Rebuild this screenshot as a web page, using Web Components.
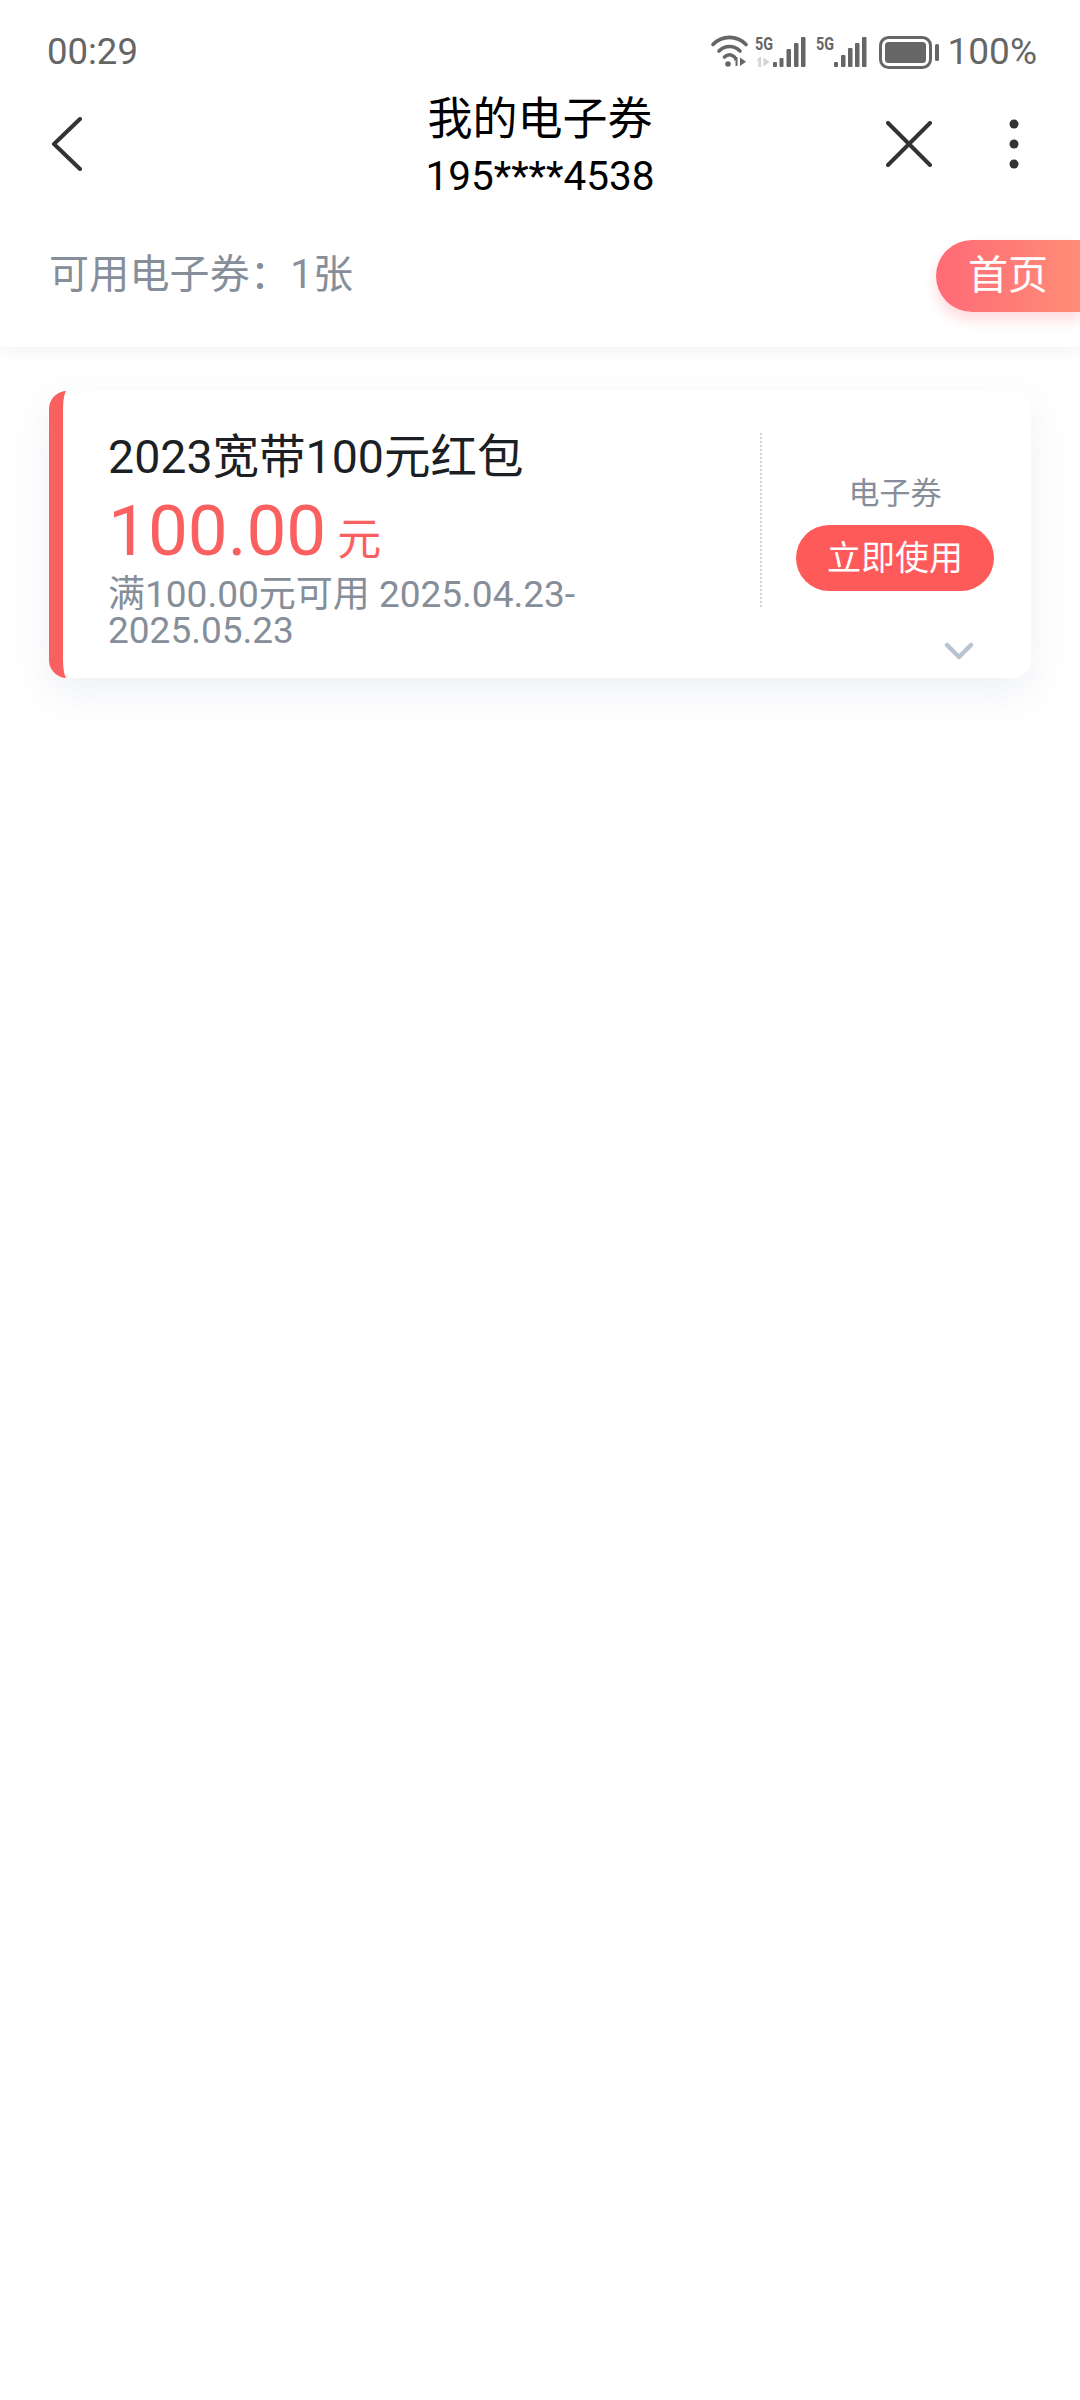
<!DOCTYPE html>
<html lang="zh-CN">
<head>
<meta charset="utf-8">
<title>我的电子券</title>
<style>
  html, body { margin: 0; background: #fff; }
  body { width: 1080px; height: 2400px; overflow: hidden; font-family: Roboto, "Noto Sans CJK SC", sans-serif; }
</style>
</head>
<body>
<coupon-page>
  <status-bar slot="top" time="00:29" battery="100%"></status-bar>
  <nav-bar slot="top" phone="195****4538">我的电子券</nav-bar>
  <coupon-summary slot="top">可用电子券：1张</coupon-summary>
  <coupon-card
    amount="100.00"
    kind="电子券"
    action="立即使用">
    <span slot="title">2023宽带100元红包</span>
    <span slot="rule">满100.00元可用 2025.04.23-<br>2025.05.23</span>
  </coupon-card>
</coupon-page>

<script>
class CouponPage extends HTMLElement {
  constructor() {
    super();
    this.attachShadow({ mode: "open" });
    this.shadowRoot.innerHTML = `
      <style>
        :host { display: block; width: 1080px; height: 2400px; background: #fff; }
        header { background: #fff; box-shadow: 0 4px 16px rgba(40, 50, 90, 0.06); position: relative; }
        main { padding: 44px 49px 0 49px; }
      </style>
      <header><slot name="top"></slot></header>
      <main><slot></slot></main>
    `;
  }
}

class StatusBar extends HTMLElement {
  constructor() {
    super();
    this.attachShadow({ mode: "open" });
  }

  connectedCallback() {
    this.shadowRoot.innerHTML = `
      <style>
        :host { display: flex; align-items: center; height: 76px; padding: 14px 43px 0 47px; color: #666; font-size: 37px; line-height: 76px; }
        .time { flex: 1; font-size: 36.500px; }
        .icons { display: flex; align-items: center; gap: 9px; }
        svg { display: block; }
      </style>
      <span class="time">${this.getAttribute("time")}</span>
      <div class="icons">
        <svg width="228" height="36" viewBox="712 34 228 36">
          <g fill="none" stroke="#666" stroke-width="3.600" stroke-linecap="round">
            <path d="M714 44.500c9-9.500 24-9.500 33 0"/>
            <path d="M720 51c6-6 15-6 21 0"/>
            <path d="M725.500 57c3-2.800 7-2.800 10 0"/>
          </g>
          <circle cx="729" cy="64" r="2.800" fill="#666"/>
          <path d="M736.500 66h2v-9h-1.500l-2 2.500v1.500l1.500-1zM741 57.500v8.500l6-4.200z" fill="#666"/>
          <g font-family="Roboto, sans-serif" font-weight="700" font-size="18" fill="#666">
            <text x="756" y="50" textLength="18" lengthAdjust="spacingAndGlyphs">5G</text>
            <text x="817" y="50" textLength="18" lengthAdjust="spacingAndGlyphs">5G</text>
          </g>
          <path d="M759.500 67h2.500v-10h-1.500l-2.500 3v1.500l1.500-1zM764.500 57.500v9l6-4.500z" fill="#d4d4d4"/>
          <g fill="#666">
            <rect x="774" y="62" width="4" height="5" rx="1"/>
            <rect x="780.500" y="58" width="4" height="9" rx="1"/>
            <rect x="787.500" y="49" width="4.500" height="18" rx="1"/>
            <rect x="795" y="43" width="4.500" height="24" rx="1"/>
            <rect x="802" y="37" width="4.500" height="30" rx="1"/>
            <rect x="835" y="62" width="4" height="5" rx="1"/>
            <rect x="842" y="55" width="4.500" height="12" rx="1"/>
            <rect x="849" y="48" width="4.500" height="19" rx="1"/>
            <rect x="856" y="43" width="4.500" height="24" rx="1"/>
            <rect x="863" y="37" width="4.500" height="30" rx="1"/>
          </g>
          <rect x="881.500" y="37.500" width="50" height="30" rx="8" fill="none" stroke="#666" stroke-width="3"/>
          <rect x="886" y="42" width="41" height="21" rx="3.500" fill="#666"/>
          <rect x="936" y="44" width="4" height="17" rx="1.500" fill="#666"/>
        </svg>
        <span>${this.getAttribute("battery")}</span>
      </div>
    `;
  }
}

class NavBar extends HTMLElement {
  constructor() {
    super();
    this.attachShadow({ mode: "open" });
  }

  connectedCallback() {
    this.shadowRoot.innerHTML = `
      <style>
        :host { display: grid; grid-template-columns: 1fr auto 1fr; height: 112px; color: #000; }
        .title { text-align: center; font-size: 45px; line-height: 56px; padding-top: 2px; }
        .phone { text-align: center; font-size: 40.500px; line-height: 50px; margin-top: 3px; }
        .side { display: flex; align-items: center; height: 108px; padding-left: 50px; }
        .side.right { justify-content: flex-end; gap: 77px; padding: 0 61px 0 0; }
        svg { display: block; }
      </style>
      <div class="side">
        <svg width="34" height="54" viewBox="0 0 34 54" fill="none" stroke="#333" stroke-width="4" stroke-linecap="round" stroke-linejoin="round">
          <path d="M30 2 4 27l26 25"/>
        </svg>
      </div>
      <div>
        <div class="title"><slot></slot></div>
        <div class="phone">${this.getAttribute("phone")}</div>
      </div>
      <div class="side right">
        <svg width="46" height="46" viewBox="0 0 46 46" fill="none" stroke="#333" stroke-width="4" stroke-linecap="round">
          <path d="M2 2l42 42M44 2 2 44"/>
        </svg>
        <svg width="10" height="50" viewBox="0 0 10 50" fill="#333">
          <circle cx="5" cy="5" r="4.500"/>
          <circle cx="5" cy="25" r="4.500"/>
          <circle cx="5" cy="45" r="4.500"/>
        </svg>
      </div>
    `;
  }
}

class CouponSummary extends HTMLElement {
  constructor() {
    super();
    this.attachShadow({ mode: "open" });
    this.shadowRoot.innerHTML = `
      <style>
        :host { display: block; position: relative; height: 100px; padding: 45px 0 0 49px; color: #868e99; font-size: 40px; letter-spacing: 0.200px; line-height: 56px; }
        .home {
          position: absolute; top: 38px; right: 0;
          width: 112px; height: 72px; padding-left: 32px;
          border-radius: 36px 0 0 36px;
          background: linear-gradient(90deg, #ff6a76, #ff8d76);
          box-shadow: 0 8px 14px rgba(255, 106, 118, 0.25);
          color: #fff; font-size: 40px; letter-spacing: 0; line-height: 72px;
        }
      </style>
      <slot></slot>
      <div class="home">首页</div>
    `;
  }
}

class CouponCard extends HTMLElement {
  constructor() {
    super();
    this.attachShadow({ mode: "open" });
  }

  connectedCallback() {
    this.shadowRoot.innerHTML = `
      <style>
        :host {
          display: flex; position: relative; height: 287px; box-sizing: border-box;
          background: #fff; border-left: 14px solid #fb6060; border-radius: 18px;
          box-shadow: 0 14px 40px rgba(70, 85, 140, 0.09);
        }
        .info { width: 697px; box-sizing: border-box; padding: 36px 0 0 45px; }
        .title { font-size: 46.500px; line-height: 60px; color: #1c1f23; }
        .amount { margin-top: 4px; line-height: 80px; color: #fb6060; font-size: 71px; display: flex; align-items: baseline; gap: 11px; }
        .amount small { font-size: 44px; }
        .rule { font-size: 37px; line-height: 36px; color: #868e99; margin-top: -3px; }
        .action { flex: 1; height: 174px; margin-top: 42px; padding: 39px 3px 0 0; box-sizing: border-box; border-left: 2px dotted #ced1d6; display: flex; flex-direction: column; align-items: center; }
        .kind { font-size: 31px; line-height: 44px; color: #868e99; }
        .use { width: 198px; height: 66px; margin-top: 9px; border-radius: 33px; background: #ff5a5a; color: #fff; font-size: 34px; line-height: 66px; text-align: center; }
        .more { position: absolute; right: 57px; bottom: 18px; display: block; }
      </style>
      <div class="info">
        <div class="title"><slot name="title"></slot></div>
        <div class="amount">${this.getAttribute("amount")}<small>元</small></div>
        <div class="rule"><slot name="rule"></slot></div>
      </div>
      <div class="action">
        <div class="kind">${this.getAttribute("kind")}</div>
        <div class="use">${this.getAttribute("action")}</div>
      </div>
      <svg class="more" width="30" height="18" viewBox="0 0 30 18" fill="none" stroke="#b9c4d0" stroke-width="4.500" stroke-linecap="round" stroke-linejoin="round">
        <path d="M3 3l12 12L27 3"/>
      </svg>
    `;
  }
}

customElements.define("coupon-page", CouponPage);
customElements.define("status-bar", StatusBar);
customElements.define("nav-bar", NavBar);
customElements.define("coupon-summary", CouponSummary);
customElements.define("coupon-card", CouponCard);
</script>
</body>
</html>
